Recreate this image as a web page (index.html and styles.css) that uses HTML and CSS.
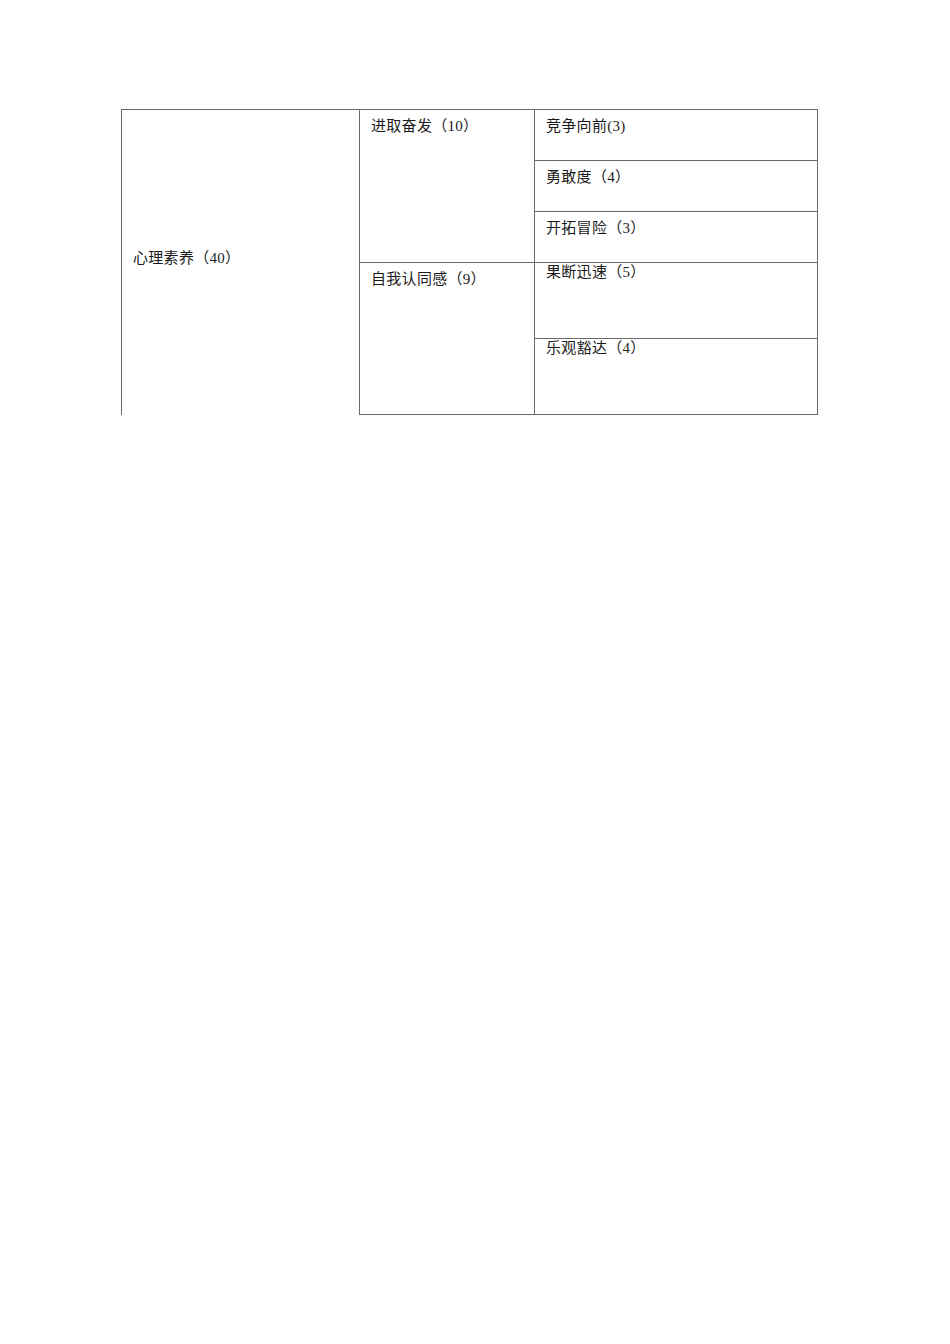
FILE: index.html
```html
<!DOCTYPE html>
<html lang="zh-CN">
<head>
<meta charset="utf-8">
<title>心理素养</title>
<link rel="stylesheet" href="styles.css">
</head>
<body>
<div class="page">
  <table class="grid">
    <colgroup>
      <col class="c1"><col class="c2"><col class="c3">
    </colgroup>
    <tbody>
      <tr class="r1">
        <td class="cat" rowspan="5">心理素养（40）</td>
        <td class="sub" rowspan="3">进取奋发（10）</td>
        <td class="item">竞争向前(3)</td>
      </tr>
      <tr class="r2">
        <td class="item">勇敢度（4）</td>
      </tr>
      <tr class="r3">
        <td class="item">开拓冒险（3）</td>
      </tr>
      <tr class="r4">
        <td class="sub" rowspan="2">自我认同感（9）</td>
        <td class="item tight">果断迅速（5）</td>
      </tr>
      <tr class="r5">
        <td class="item tight">乐观豁达（4）</td>
      </tr>
    </tbody>
  </table>
</div>
</body>
</html>
```

FILE: styles.css
```css
html, body {
  margin: 0;
  padding: 0;
  background: #ffffff;
}

.page {
  padding: 109px 0 0 121px;
  font-family: "Liberation Serif", "Noto Sans CJK SC", serif;
  font-size: 15px;
  color: #1a1a1a;
  text-spacing-trim: space-all;
}

.grid {
  border-collapse: collapse;
  table-layout: fixed;
  width: 696px;
}

.c1 { width: 238px; }
.c2 { width: 175px; }
.c3 { width: 283px; }

.grid td {
  border: 1px solid #6a6a6a;
  padding: 0 0 0 11px;
  vertical-align: top;
  line-height: 20px;
  white-space: nowrap;
  letter-spacing: 0.3px;
}

.grid td.cat {
  vertical-align: middle;
  border-bottom: none;
  padding: 0 0 8px 11px;
}

.grid td.sub {
  padding-top: 6px;
}

.grid td.item {
  padding-top: 6px;
}

.grid td.item.tight {
  padding-top: 0;
  line-height: 18px;
}

.r1, .r2, .r3 { height: 51px; }
.r4 { height: 76px; }
.r5 { height: 76px; }
```
